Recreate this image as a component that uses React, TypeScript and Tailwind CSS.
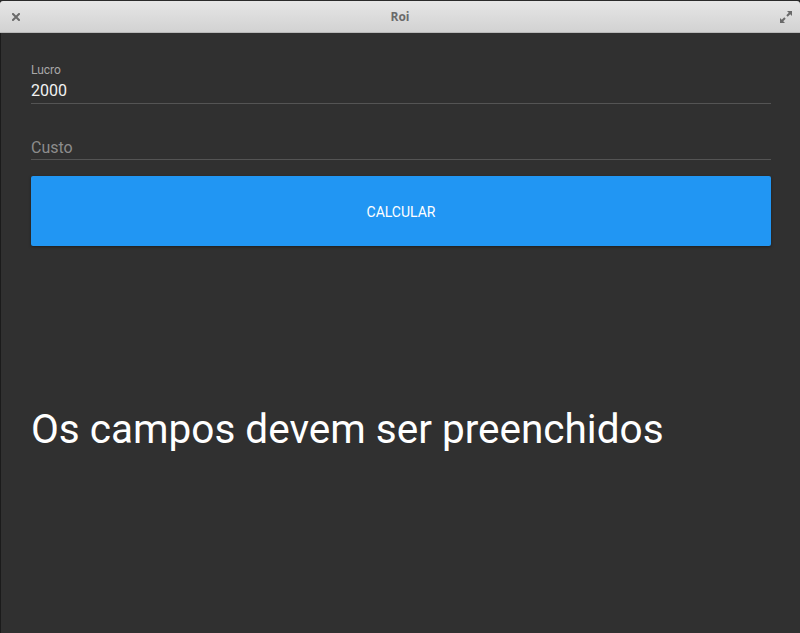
import React from "react";

export default function App() {
  return (
    <div className="w-[800px] h-[633px] bg-[#1b1b1b] flex flex-col overflow-hidden" style={{ fontFamily: "Roboto, 'Noto Sans', sans-serif" }}>
      <div className="h-[1px] bg-[#2a2a2a]" />
      <div className="h-[32px] rounded-t-[3px] bg-gradient-to-b from-[#e6e6e6] to-[#d2d2d2] border-b border-[#b8b8b8] relative flex items-center justify-center">
        <svg className="absolute left-[12px] top-[12px]" width="8" height="8" viewBox="0 0 8 8">
          <path d="M1 1 L7 7 M7 1 L1 7" stroke="#6a6a6a" strokeWidth="2" strokeLinecap="square" />
        </svg>
        <span className="text-[12px] font-bold text-[#6a6a6a] pt-[1px]" style={{ fontFamily: "'Open Sans', 'DejaVu Sans', sans-serif" }}>Roi</span>
        <svg className="absolute right-[8px] top-[10px]" width="12" height="12" viewBox="0 0 12 12">
          <path d="M7 0 H12 V5 Z" fill="#6a6a6a" />
          <path d="M0 7 V12 H5 Z" fill="#6a6a6a" />
          <path d="M10 2 L7 5 M2 10 L5 7" stroke="#6a6a6a" strokeWidth="2" />
        </svg>
      </div>
      <div className="flex-1 bg-[#303030] ml-[1px] pl-[30px] pr-[29px] pt-[30px] flex flex-col">
        <div className="flex flex-col border-b border-[#545454] pb-[2px]">
          <span className="text-[12px] leading-[14px] text-[#a8a8a8]">Lucro</span>
          <span className="text-[16px] leading-[20px] mt-[4px] text-[#f2f2f2]">2000</span>
        </div>
        <div className="flex flex-col border-b border-[#545454] pt-[1px] pb-[1px] mt-[33px]">
          <span className="text-[16px] leading-[20px] text-[#8c8c8c]">Custo</span>
        </div>
        <button className="mt-[16px] h-[70px] pt-[3px] bg-[#2196f3] rounded-[2px] text-white text-[14px] shadow-[0_1px_3px_rgba(0,0,0,0.4)]">CALCULAR</button>
        <div className="mt-[159px] text-[40.5px] leading-[48px] text-white">Os campos devem ser preenchidos</div>
      </div>
    </div>
  );
}
